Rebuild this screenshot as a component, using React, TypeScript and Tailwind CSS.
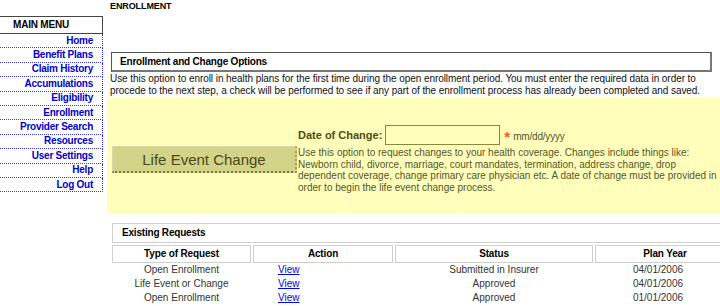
import React from "react";

const menu = [
  "Home",
  "Benefit Plans",
  "Claim History",
  "Accumulations",
  "Eligibility",
  "Enrollment",
  "Provider Search",
  "Resources",
  "User Settings",
  "Help",
  "Log Out",
];

const rows = [
  ["Open Enrollment", "Submitted in Insurer", "04/01/2006"],
  ["Life Event or Change", "Approved", "04/01/2006"],
  ["Open Enrollment", "Approved", "01/01/2006"],
];

export default function App() {
  return (
    <div
      className="w-[720px] h-[306px] overflow-hidden bg-white flex items-start text-black"
      style={{ fontFamily: '"Liberation Sans", Arial, sans-serif' }}
    >
      {/* Left menu */}
      <div className="w-[103px] shrink-0 mt-[16px]">
        <div className="h-[18px] border-t border-r border-[#444] border-b border-b-[#444] flex items-center justify-center pr-[20px] text-[10px] font-bold leading-none tracking-[-0.2px]">
          MAIN MENU
        </div>
        {menu.map((m) => (
          <div
            key={m}
            className="h-[14.4px] border-r border-r-[#1f1fe0] border-b border-dotted border-b-[#3a3ae6] flex items-center justify-end pr-[9px] text-[10px] font-bold leading-none text-[#0000cc] tracking-[-0.25px]"
          >
            {m}
          </div>
        ))}
      </div>

      {/* Content */}
      <div className="ml-[4px] w-[640px] shrink-0 flex flex-col">
        <div className="pl-[3px] h-[12px] pt-[2px] text-[9px] font-bold leading-none tracking-[-0.1px]">
          ENROLLMENT
        </div>

        <div className="ml-[4px] mt-[40px] w-[601px] h-[20px] border border-[#555] border-r-2 border-b-2 border-r-[#777] border-b-[#777] flex items-center pl-[8px] text-[10px] font-bold leading-none tracking-[-0.2px]">
          Enrollment and Change Options
        </div>

        <div className="pl-[3px] mt-[1px] text-[10px] leading-[12px] text-[#111] whitespace-nowrap tracking-[-0.06px]">
          Use this option to enroll in health plans for the first time during the open enrollment period. You must enter the required data in order to
          <br />
          procede to the next step, a check will be performed to see if any part of the enrollment process has already been completed and saved.
        </div>

        {/* Yellow */}
        <div className="mt-[1px] h-[115px] bg-[#ffffbb] flex items-start pl-[5px] text-[#55552a]">
          <button
            className="mt-[48px] w-[185px] h-[27px] shrink-0 bg-[#d3d38a] border-t border-l border-[#e4e4b0] border-b-2 border-r-2 border-dotted border-b-[#7a7a35] border-r-[#9a9a55] text-[15px] leading-none text-[#4a4a14] flex items-center justify-center"
            style={{ fontFamily: '"Liberation Sans", Arial, sans-serif' }}
          >
            Life Event Change
          </button>
          <div className="ml-[1px] mt-[27px] flex flex-col">
            <div className="h-[20px] flex items-center">
              <span className="text-[11px] font-bold leading-none text-[#4d4d18]">
                Date of Change:
              </span>
              <div className="ml-[3px] w-[115px] h-[20px] border border-[#8a8a3a] bg-[#ffffbb]" />
              <span className="ml-[4px] mt-[2px] text-[15px] font-bold leading-none text-[#ff5a14]">
                *
              </span>
              <span className="ml-[3px] mt-[3px] text-[10px] leading-none text-[#55552a] tracking-[-0.2px]">
                mm/dd/yyyy
              </span>
            </div>
            <div className="mt-[2px] text-[10px] leading-[11.7px] whitespace-nowrap text-[#55552a]">
              Use this option to request changes to your health coverage. Changes include things like:
              <br />
              Newborn child, divorce, marriage, court mandates, termination, address change, drop
              <br />
              dependent coverage, change primary care physician etc. A date of change must be provided in
              <br />
              order to begin the life event change process.
            </div>
          </div>
        </div>

        {/* Existing requests */}
        <div className="ml-[5px] mt-[10px] w-[625px]">
          <div className="h-[20px] border border-[#cfcfcf] border-r-0 flex items-center pl-[9px] text-[10px] font-bold leading-none tracking-[-0.2px]">
            Existing Requests
          </div>
          <div className="mt-[2px] grid grid-cols-[139px_140px_198px_140px] gap-x-[2px]">
            {["Type of Request", "Action", "Status", "Plan Year"].map((h) => (
              <div
                key={h}
                className="h-[18px] border border-[#cfcfcf] flex items-center justify-center text-[10px] font-bold leading-none tracking-[-0.15px]"
              >
                {h}
              </div>
            ))}
            {rows.map((r, i) => (
              <React.Fragment key={i}>
                <div className="h-[14px] flex items-center justify-center text-[10px] leading-none text-[#333]">
                  {r[0]}
                </div>
                <div className="h-[14px] flex items-center pl-[25px] text-[10px] leading-none">
                  <a href="#" className="text-[#0000ee] underline">
                    View
                  </a>
                </div>
                <div className="h-[14px] flex items-center justify-center text-[10px] leading-none text-[#333]">
                  {r[1]}
                </div>
                <div className="h-[14px] flex items-center justify-center pr-[14px] text-[10px] leading-none text-[#333]">
                  {r[2]}
                </div>
              </React.Fragment>
            ))}
          </div>
        </div>
      </div>
    </div>
  );
}
